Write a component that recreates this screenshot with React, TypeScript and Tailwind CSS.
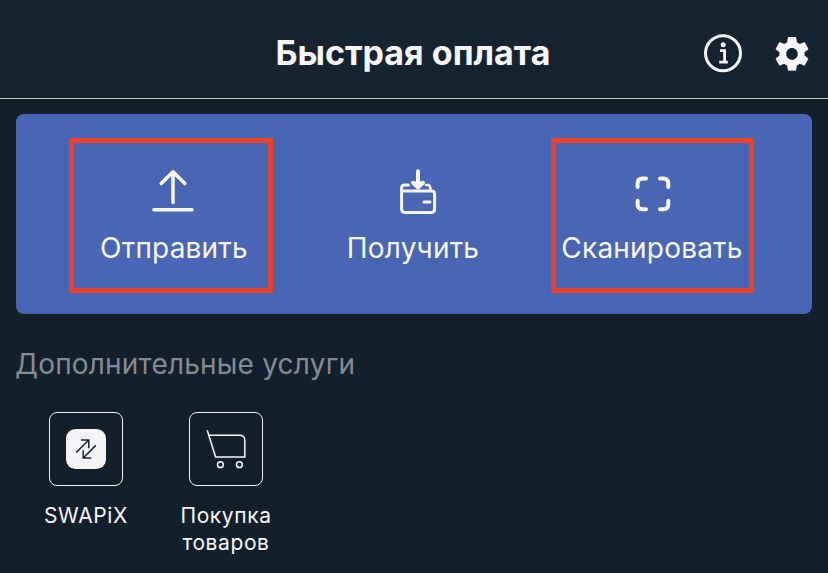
import type { ReactNode } from "react";

interface ItemProps {
  label: string;
  icon: ReactNode;
}

const InfoIcon = () => (
  <svg width="40" height="40" viewBox="0 0 40 40" fill="none">
    <circle cx="20" cy="20.3" r="17.5" stroke="currentColor" strokeWidth="3" />
    <circle cx="20.2" cy="11.8" r="2.5" fill="currentColor" />
    <path
      d="M17 17.7h4.6V28.3M16.2 29.2h8.6"
      stroke="currentColor"
      strokeWidth="2.8"
    />
  </svg>
);

const GearIcon = () => (
  <svg width="42" height="42" viewBox="0 -0.5 24 24" fill="currentColor">
    <path d="M19.14 12.94c.04-.3.06-.61.06-.94 0-.32-.02-.64-.07-.94l2.03-1.58c.18-.14.23-.41.12-.61l-1.92-3.32c-.12-.22-.37-.29-.59-.22l-2.39.96c-.5-.38-1.03-.7-1.62-.94l-.36-2.54c-.04-.24-.24-.41-.48-.41h-3.84c-.24 0-.43.17-.47.41l-.36 2.54c-.59.24-1.13.57-1.62.94l-2.39-.96c-.22-.08-.47 0-.59.22L2.74 8.87c-.12.21-.08.47.12.61l2.03 1.58c-.05.3-.09.63-.09.94s.02.64.07.94l-2.03 1.58c-.18.14-.23.41-.12.61l1.92 3.32c.12.22.37.29.59.22l2.39-.96c.5.38 1.03.7 1.62.94l.36 2.54c.05.24.24.41.48.41h3.84c.24 0 .44-.17.47-.41l.36-2.54c.59-.24 1.13-.56 1.62-.94l2.39.96c.22.08.47 0 .59-.22l1.92-3.32c.12-.22.07-.47-.12-.61l-2.01-1.58zM12 15.3c-1.8 0-3.3-1.5-3.3-3.3s1.5-3.3 3.3-3.3 3.3 1.5 3.3 3.3-1.5 3.3-3.3 3.3z" />
  </svg>
);

const SendIcon = () => (
  <svg
    width="48"
    height="48"
    viewBox="1 0 48 48"
    fill="none"
    stroke="currentColor"
    strokeWidth="3.6"
    strokeLinecap="round"
    strokeLinejoin="round"
  >
    <path d="M24 36.5V6M12.2 17.6 24 5.8l11.8 11.8M5 43.8h38" />
  </svg>
);

const ReceiveIcon = () => (
  <svg
    width="48"
    height="48"
    viewBox="-5 0 48 48"
    fill="none"
    stroke="currentColor"
    strokeWidth="3"
    strokeLinecap="round"
    strokeLinejoin="round"
  >
    <path d="M14.5 19H10.5Q7.6 19 7.6 22V43Q7.6 46.4 10.8 46.4H37.4Q40.6 46.4 40.6 43V28Q40.6 25 37.4 25H8.4" />
    <path d="M32 19H34.4Q36.2 19.6 36.6 23.8" strokeWidth="2.7" />
    <path d="M30 36h6" />
    <path d="M24 5.2V19" strokeWidth="4" />
    <path d="M19 16.7 24 21.5l5-4.8-5 1.6Z" strokeWidth="4" fill="currentColor" />
  </svg>
);

const ScanIcon = () => (
  <svg
    width="48"
    height="48"
    viewBox="-1 0 48 48"
    fill="none"
    stroke="currentColor"
    strokeWidth="4"
    strokeLinecap="round"
  >
    <path d="M17 12.5H13.4Q8.6 12.5 8.6 17.3v3.6M31 12.5h3.3Q39.3 12.5 39.3 17.3v3.6M8.6 34.7v3.6Q8.6 43.2 13.4 43.2H17M39.3 34.7v3.6Q39.3 43.2 34.3 43.2H31" />
  </svg>
);

const SwapIcon = () => (
  <svg width="40" height="40" viewBox="0 0 40 40" fill="none">
    <rect width="40" height="40" rx="9.5" fill="#f4f4f7" />
    <path
      d="M10.2 23.5 22.7 11M14.9 11h7.9v8.2M29.8 16.4 17.2 29M17.2 21.2V29h8"
      stroke="#16232f"
      strokeWidth="1.5"
    />
  </svg>
);

const CartIcon = () => (
  <svg width="40" height="40" viewBox="0 0 40 40" fill="none" stroke="currentColor" strokeWidth="1.5">
    <path d="M1.2 1.2 9.6 28H38.8V11.4Q38.8 6.2 33.4 6.2H2.8" />
    <circle cx="14.4" cy="35.7" r="2.9" />
    <circle cx="33.4" cy="35.7" r="2.9" />
  </svg>
);

const Action = ({ label, icon }: ItemProps) => (
  <button className="flex flex-col items-center">
    {icon}
    <span className="mt-4 text-[28px] leading-9 tracking-[0.2px] whitespace-nowrap">
      {label}
    </span>
  </button>
);

const Service = ({ label, icon }: ItemProps) => (
  <button className="flex w-[140px] flex-col items-center">
    <span className="grid h-[74px] w-[74px] place-items-center rounded-lg border border-[#f4f4f7]">
      {icon}
    </span>
    <span className="mt-4 text-[21px] leading-[27px] tracking-[0.6px]">{label}</span>
  </button>
);

const App = () => {
  return (
    <main className="h-[573px] w-[828px] overflow-hidden bg-[#131f2a] font-['Inter',sans-serif] text-[#f7f7fb]">
      {/* HEADER */}
      <header className="grid h-[99px] grid-cols-[1fr_auto_1fr] items-center border-b border-[#c5c4c5] bg-[#162330] pt-2">
        <h1 className="col-start-2 pr-0.5 text-[34px] leading-10 font-bold">Быстрая оплата</h1>
        <div className="flex items-center justify-end gap-7 pr-[15px]">
          <button>
            <InfoIcon />
          </button>
          <button>
            <GearIcon />
          </button>
        </div>
      </header>

      {/* QUICK ACTIONS */}
      <section className="relative mx-4 mt-[15px] grid h-[200px] grid-cols-[repeat(3,239px)] items-start justify-center rounded-lg bg-[#4966b5] pt-[52px] pr-0.5">
        <Action label="Отправить" icon={<SendIcon />} />
        <Action label="Получить" icon={<ReceiveIcon />} />
        <Action label="Сканировать" icon={<ScanIcon />} />
        <span className="absolute top-6 left-[53px] h-[155px] w-[204px] border-[5px] border-[#e94228]" />
        <span className="absolute top-6 left-[535px] h-[155px] w-[203px] border-[5px] border-[#e94228]" />
      </section>

      {/* SERVICES */}
      <section>
        <h2 className="mt-8 pl-[15px] text-[28px] leading-9 tracking-[0.2px] text-[#858b92]">
          Дополнительные услуги
        </h2>
        <div className="mt-[30px] flex pl-4">
          <Service label="SWAPiX" icon={<SwapIcon />} />
          <Service label="Покупка товаров" icon={<CartIcon />} />
        </div>
      </section>
    </main>
  );
};

export default App;
